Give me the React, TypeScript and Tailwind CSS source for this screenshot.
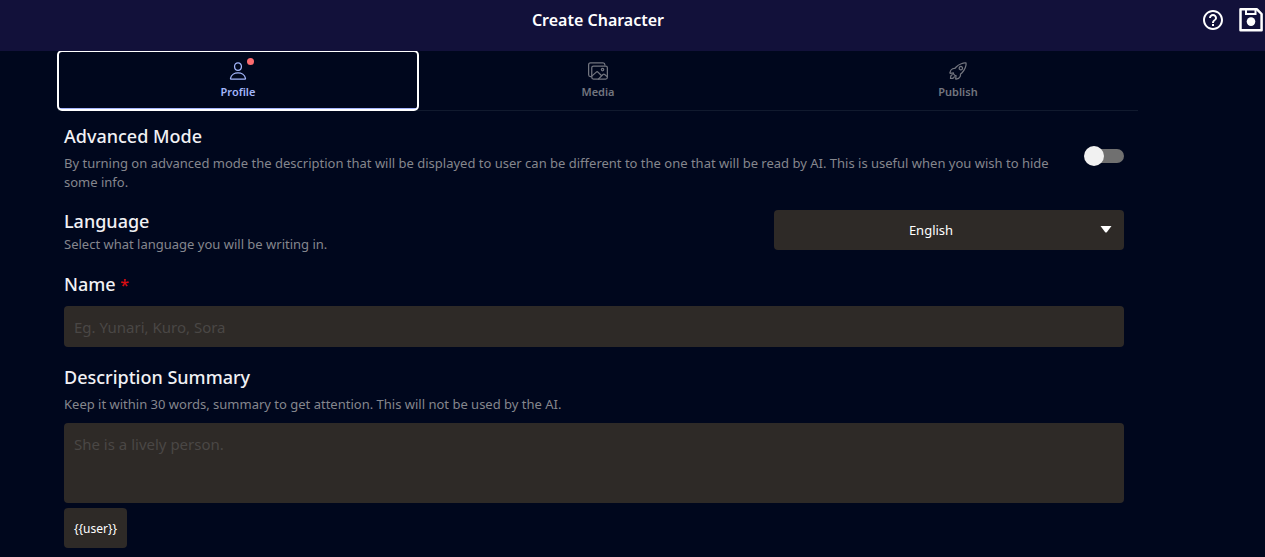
import { useState } from "react";
import type { ReactNode } from "react";
import { IoImagesOutline, IoPersonOutline, IoRocketOutline } from "react-icons/io5";
import { MdHelpOutline } from "react-icons/md";

const tabs = [
  { id: "profile", label: "Profile", Icon: IoPersonOutline, alert: true },
  { id: "media", label: "Media", Icon: IoImagesOutline, alert: false },
  { id: "publish", label: "Publish", Icon: IoRocketOutline, alert: false },
];

function SaveIcon() {
  return (
    <svg viewBox="0 0 24 24" className="size-6" fill="none" stroke="currentColor" strokeWidth="2.5" aria-hidden="true">
      <path d="M1.5 1.3H18L22.6 6V22.2H1.5Z" strokeLinejoin="round" />
      <path d="M7 1.3V6H16.5V1.3" strokeWidth="2" />
      <circle cx="12" cy="13.6" r="4.3" fill="currentColor" stroke="none" />
    </svg>
  );
}

function Title({ htmlFor, children }: { htmlFor: string; children: ReactNode }) {
  return (
    <label htmlFor={htmlFor} className="block text-lg leading-6 font-medium text-[#f1f1f4]">
      {children}
    </label>
  );
}

function Hint({ id, children }: { id: string; children: ReactNode }) {
  return (
    <p id={id} className="text-[13px] leading-[19px] text-[#85868d]">
      {children}
    </p>
  );
}

export default function App() {
  const [active, setActive] = useState("profile");

  return (
    <div className="min-h-screen bg-[#00071d] font-['Noto_Sans','Open_Sans',sans-serif] text-white">
      <header className="relative z-10 grid h-[51px] grid-cols-[1fr_69px] bg-[#12113a]">
        <h1 className="pt-2 text-center text-base leading-6 font-semibold">Create Character</h1>
        <div className="flex h-10 items-center justify-between pr-0.5 pl-[5px]">
          <button type="button" aria-label="Help">
            <MdHelpOutline className="size-6" />
          </button>
          <button type="button" aria-label="Save">
            <SaveIcon />
          </button>
        </div>
      </header>

      <main className="pr-[69px]">
        <div className="mx-auto max-w-[1080px]">
          <div role="tablist" className="grid h-[60px] grid-cols-3 border-b border-[#111a2e]">
            {tabs.map(({ id, label, Icon, alert }) => (
              <button
                key={id}
                type="button"
                role="tab"
                aria-selected={active === id}
                onClick={() => setActive(id)}
                className={
                  active === id
                    ? "flex flex-col items-center rounded-sm border-b-2 border-[#a5b4fc] pt-[10px] text-[#a3b6fb] outline-2 -outline-offset-1 outline-white"
                    : "flex flex-col items-center pt-[10px] text-[#72757f]"
                }
              >
                <span className="relative">
                  <Icon className="size-5" />
                  {alert && <span className="absolute -top-[3px] -right-1.5 size-[7px] rounded-full bg-[#fb6b6f]" />}
                </span>
                <span className="mt-[3px] text-[11px] leading-4 font-semibold">
                  {label}
                </span>
              </button>
            ))}
          </div>

          <form className="pt-[13px] pr-3.5 pb-2 pl-1.5" onSubmit={(e) => e.preventDefault()}>
            <section className="flex items-center gap-5">
              <div className="flex-1">
                <Title htmlFor="advanced">Advanced Mode</Title>
                <div className="mt-1.5">
                  <Hint id="advanced-hint">
                    By turning on advanced mode the description that will be displayed to user can be different to the
                    one that will be read by AI. This is useful when you wish to hide some info.
                  </Hint>
                </div>
              </div>
              <input
                id="advanced"
                type="checkbox"
                role="switch"
                aria-describedby="advanced-hint"
                className="relative mb-1 h-3.5 w-9 appearance-none rounded-full bg-[#707070] before:absolute before:-top-[3px] before:-left-1 before:size-5 before:rounded-full before:bg-[#f1f1f1] checked:before:left-5"
              />
            </section>

            <section className="mt-[17px] flex items-start justify-between">
              <div>
                <Title htmlFor="language">Language</Title>
                <div className="mt-0.5">
                  <Hint id="language-hint">Select what language you will be writing in.</Hint>
                </div>
              </div>
              <div className="relative mt-px w-[350px]">
                <select
                  id="language"
                  aria-describedby="language-hint"
                  className="h-10 w-full appearance-none rounded bg-[#2e2a27] pt-0.5 pr-9 [text-align-last:center] text-[13px] text-white"
                >
                  <option>English</option>
                </select>
                <svg
                  viewBox="0 0 12 7"
                  className="pointer-events-none absolute top-4 right-3 h-[7px] w-3"
                  fill="currentColor"
                  aria-hidden="true"
                >
                  <path d="M0.5 0H11.5L6.8 6.2Q6 7 5.2 6.2Z" />
                </svg>
              </div>
            </section>

            <section className="mt-[18px]">
              <Title htmlFor="name">
                Name <span className="text-base leading-4 text-[#d80d12]">*</span>
              </Title>
              <input
                id="name"
                required
                placeholder="Eg. Yunari, Kuro, Sora"
                className="mt-2.5 block h-[41px] w-full rounded bg-[#2e2a27] px-2.5 text-[15px] placeholder:text-[#4a4745]"
              />
            </section>

            <section className="mt-[18px]">
              <Title htmlFor="summary">Description Summary</Title>
              <div className="mt-1.5">
                <Hint id="summary-hint">
                  Keep it within 30 words, summary to get attention. This will not be used by the AI.
                </Hint>
              </div>
              <textarea
                id="summary"
                aria-describedby="summary-hint"
                placeholder="She is a lively person."
                className="mt-[9px] block h-20 w-full resize-none rounded bg-[#2e2a27] px-2.5 py-2.5 text-[15px] leading-[22px] placeholder:text-[#4a4745]"
              />
              <button type="button" className="mt-[5px] h-10 rounded bg-[#2e2a27] px-2.5 pt-0.5 text-xs">
                {"{{user}}"}
              </button>
            </section>
          </form>
        </div>
      </main>
    </div>
  );
}
